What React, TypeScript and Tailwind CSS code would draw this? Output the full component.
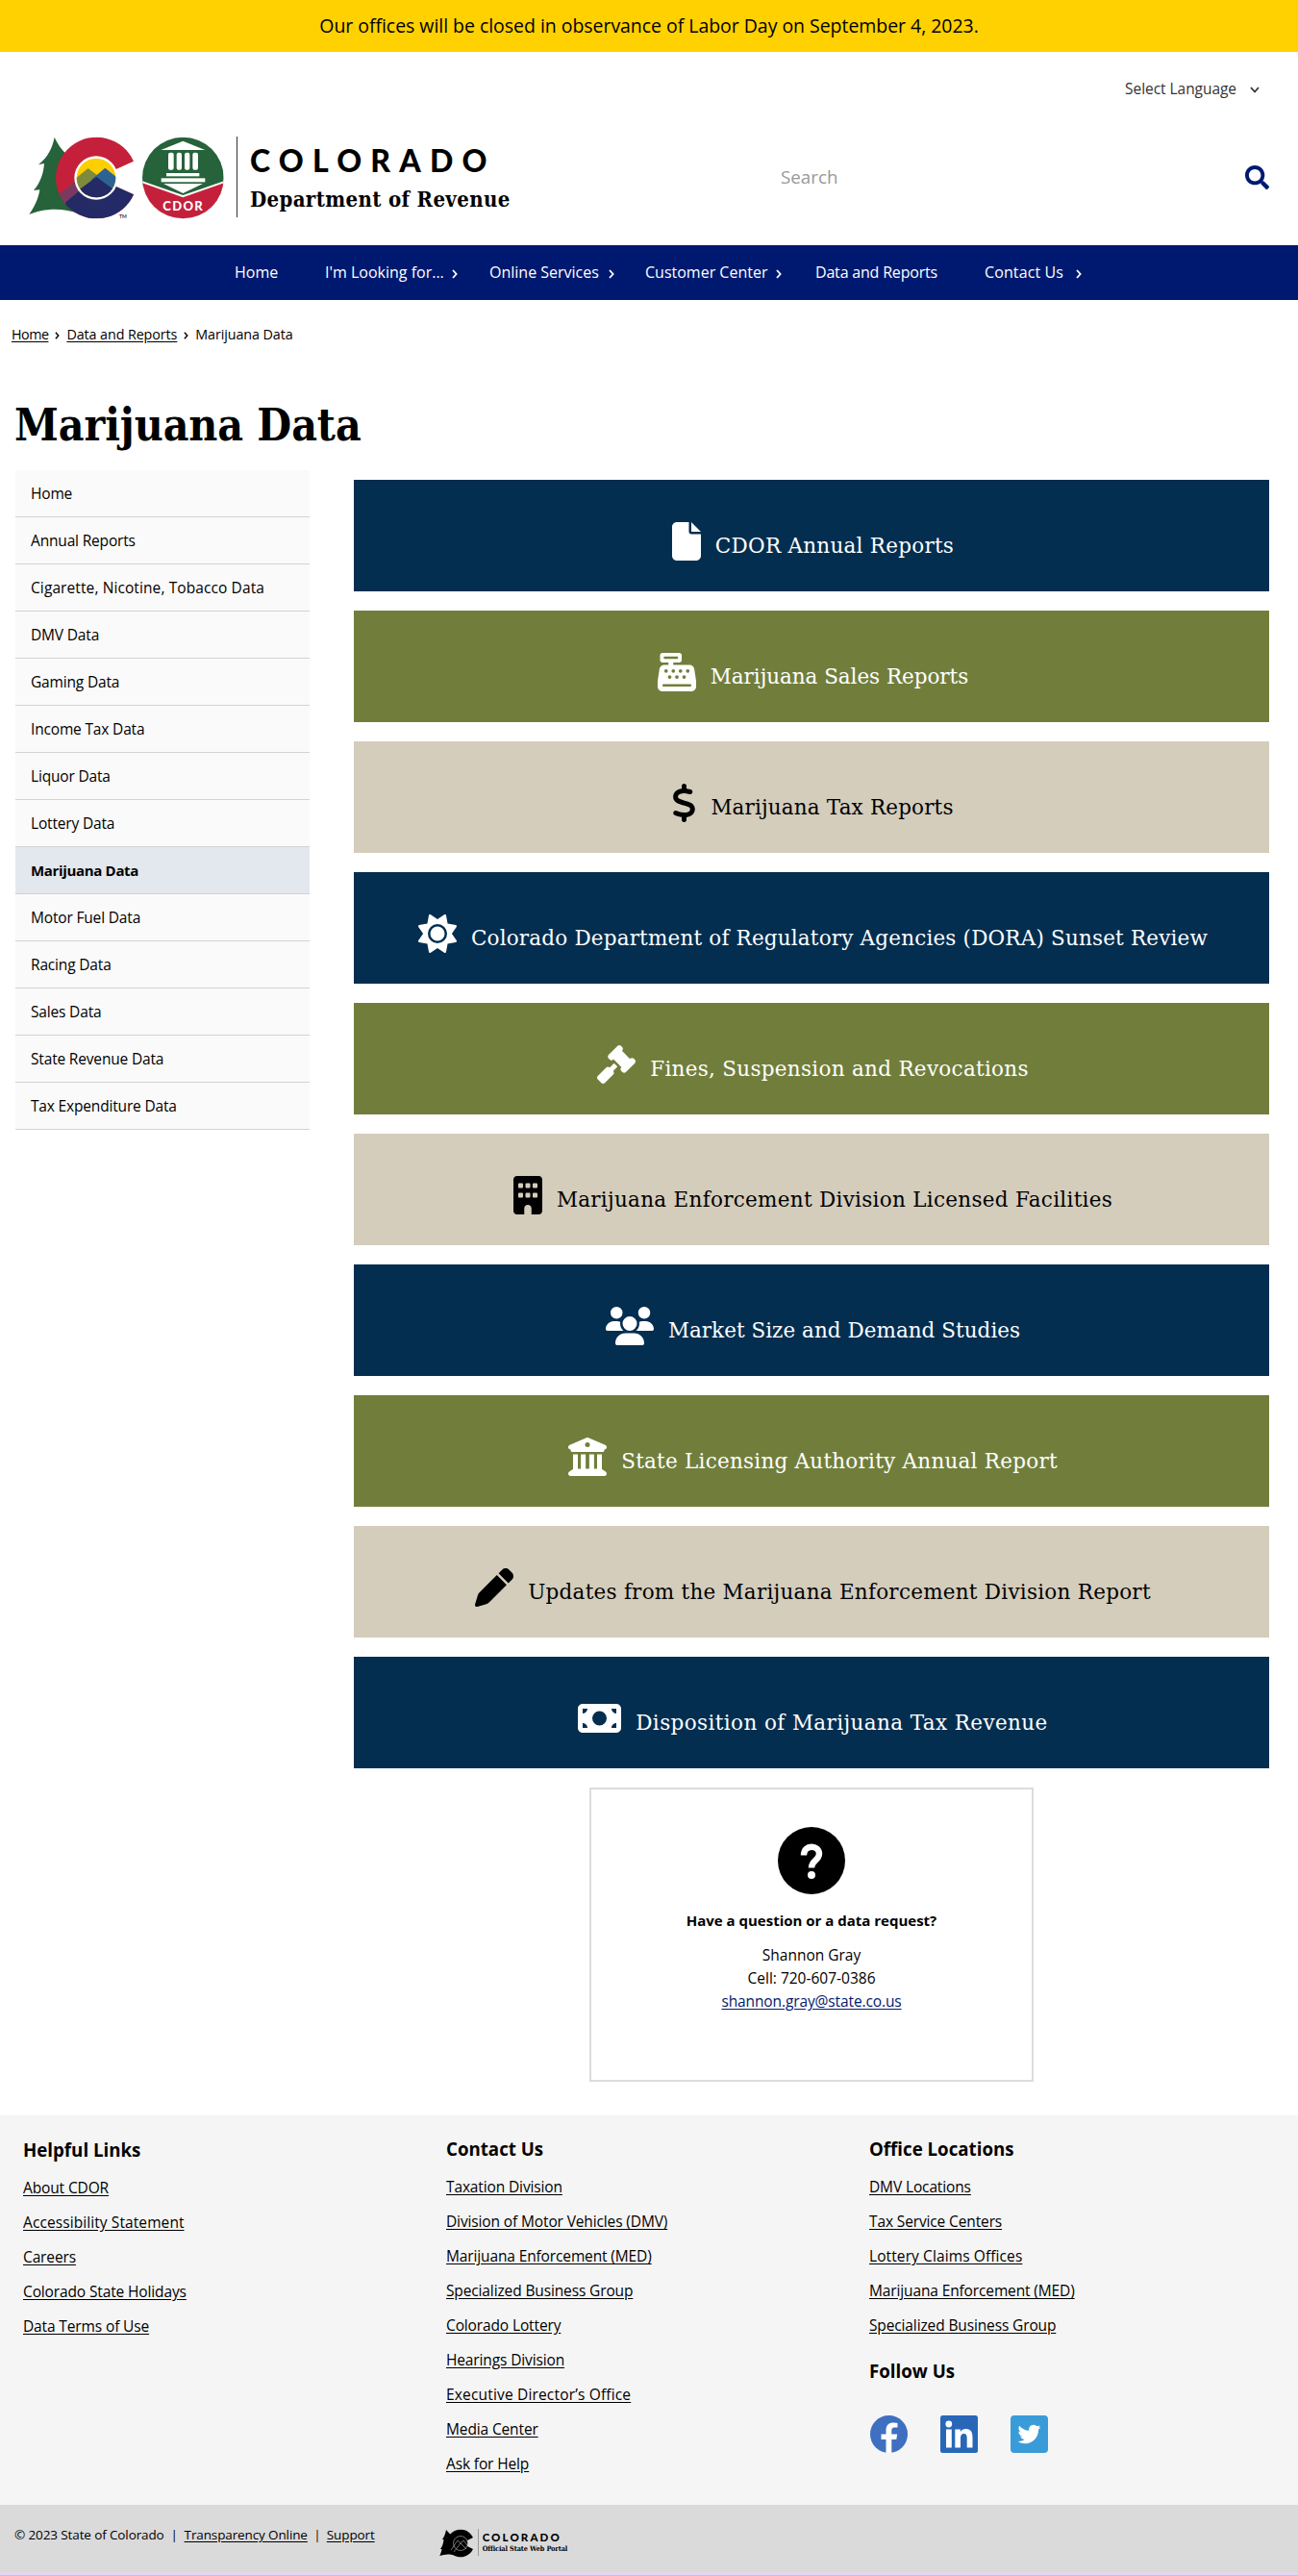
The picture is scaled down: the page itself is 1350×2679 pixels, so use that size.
import type { ReactNode } from "react";
import {
  FaBuilding,
  FaBuildingColumns,
  FaCashRegister,
  FaDollarSign,
  FaFile,
  FaGavel,
  FaMoneyBill,
  FaPen,
  FaSun,
  FaUsers,
} from "react-icons/fa6";
import { FaSearch } from "react-icons/fa";

function Chevron({ className, down = false }: { className: string; down?: boolean }) {
  return (
    <svg viewBox="0 0 6 10" className={className} fill="none" stroke="currentColor" strokeWidth="1.8">
      {down ? <path d="M-1 3l4 4.5L7 3" /> : <path d="M1 1l3.6 4L1 9" />}
    </svg>
  );
}

function ColoradoLogo() {
  return (
    <svg viewBox="30 36 612 260" className="h-[86.7px] w-[204px] shrink-0">
      <defs>
        <clipPath id="c-outer">
          <path d="M357 113A127 127 0 1 0 357 217L302 192V138Z" />
        </clipPath>
        <clipPath id="c-inner">
          <circle cx="240" cy="165" r="61" />
        </clipPath>
        <clipPath id="badge">
          <circle cx="511" cy="165" r="127" />
        </clipPath>
      </defs>
      <path
        d="M110 38C104 68 92 98 60 124L78 120C76 150 66 180 45 204L64 202C60 230 46 258 31 279C70 262 130 254 192 278L240 165L148 90C134 80 120 60 110 38Z"
        fill="#26623a"
      />
      <g clipPath="url(#c-outer)">
        <rect x="100" y="30" width="270" height="270" fill="#c5203b" />
        <path d="M110 228L185 168L210 200L150 246L130 260Z" fill="#7a3a60" />
        <path d="M145 241L190 203L250 160L380 190V300H140Z" fill="#242a66" />
      </g>
      <circle cx="240" cy="165" r="68" fill="#fff" />
      <g clipPath="url(#c-inner)">
        <rect x="170" y="95" width="140" height="140" fill="#fccf03" />
        <path d="M160 180L215 135L250 162L200 230H160Z" fill="#7f8b3c" />
        <path d="M225 170L268 134L320 176V230H240Z" fill="#2d6293" />
        <path d="M160 232L191 199L241 162L291 199L320 232L280 260H200Z" fill="#242a66" />
      </g>
      <text x="312" y="290" fontSize="15" fontWeight="700" fill="#333" fontFamily="Lato, sans-serif">
        TM
      </text>
      <g clipPath="url(#badge)">
        <rect x="384" y="38" width="254" height="254" fill="#26623a" />
        <path d="M370 170L511 219L652 170V300H370Z" fill="#fff" />
        <path d="M370 176L511 226L652 176V300H370Z" fill="#c5203b" />
      </g>
      <g fill="#fff">
        <path d="M442 78L511 50L580 78Z" />
        <rect x="465" y="86" width="17" height="54" rx="6" />
        <rect x="491" y="86" width="16" height="54" rx="6" />
        <rect x="516" y="86" width="16" height="54" rx="6" />
        <rect x="541" y="86" width="17" height="54" rx="6" />
        <rect x="459" y="150" width="103" height="10" />
        <rect x="443" y="166" width="137" height="12" />
        <path d="M450 183H573L511 213Z" />
        <text
          x="512"
          y="267"
          fontSize="39"
          fontWeight="900"
          textAnchor="middle"
          letterSpacing="4"
          fontFamily="Lato, sans-serif"
        >
          CDOR
        </text>
      </g>
    </svg>
  );
}

function PortalMark() {
  return (
    <svg viewBox="0 0 36 30" className="h-[30px] w-[36px]">
      <path d="M7 1C6 6 4.500 9 3 11H4.500C4 16 2.500 19 1 21H2.500C2 24 1 27 0 28C6 26 12 26 17 28L20 15Z" />
      <path d="M35 9A14.300 14.300 0 1 0 35 21L29 18V12Z" />
      <circle cx="22" cy="15" r="7.500" fill="#000" stroke="#bbb" strokeWidth="0.600" />
      <path d="M12 22L19 12L22 15L25 12L29 17M15 24L22 15L28 21" fill="none" stroke="#bbb" strokeWidth="0.600" />
    </svg>
  );
}

const nav = [
  { label: "Home", box: "w-[94px]", gap: "" },
  { label: "I'm Looking for...", box: "w-[171px]", gap: "ml-[8px]" },
  { label: "Online Services", box: "w-[162px]", gap: "ml-[10px]" },
  { label: "Customer Center", box: "w-[177px]", gap: "ml-[9px]" },
  { label: "Data and Reports", box: "w-[176px] tracking-[-0.19px]", gap: "" },
  { label: "Contact Us", box: "tracking-[0.11px]", gap: "ml-[13px]" },
];

const sideLinks = [
  "Home",
  "Annual Reports",
  "Cigarette, Nicotine, Tobacco Data",
  "DMV Data",
  "Gaming Data",
  "Income Tax Data",
  "Liquor Data",
  "Lottery Data",
  "Marijuana Data",
  "Motor Fuel Data",
  "Racing Data",
  "Sales Data",
  "State Revenue Data",
  "Tax Expenditure Data",
];

const navy = "bg-[#032e50] text-white";
const olive = "bg-[#717e3b] text-white";
const sand = "bg-[#d4cdbc] text-black";

const reports: { label: string; tone: string; track: string; icon: ReactNode }[] = [
  { label: "CDOR Annual Reports", tone: navy, track: "tracking-[0.25px]", icon: <FaFile className="h-10 w-[30px]" /> },
  { label: "Marijuana Sales Reports", tone: olive, track: "tracking-[-0.05px]", icon: <FaCashRegister className="size-10" /> },
  { label: "Marijuana Tax Reports", tone: sand, track: "tracking-[0.16px]", icon: <FaDollarSign className="h-10 w-[25px]" /> },
  {
    label: "Colorado Department of Regulatory Agencies (DORA) Sunset Review",
    tone: navy,
    track: "tracking-[0.18px]",
    icon: <FaSun className="size-10" />,
  },
  { label: "Fines, Suspension and Revocations", tone: olive, track: "tracking-[0.29px]", icon: <FaGavel className="size-10" /> },
  {
    label: "Marijuana Enforcement Division Licensed Facilities",
    tone: sand,
    track: "tracking-[0.29px]",
    icon: <FaBuilding className="h-10 w-[30px]" />,
  },
  { label: "Market Size and Demand Studies", tone: navy, track: "tracking-[0.03px]", icon: <FaUsers className="h-10 w-[50px]" /> },
  {
    label: "State Licensing Authority Annual Report",
    tone: olive,
    track: "tracking-[0.24px]",
    icon: <FaBuildingColumns className="size-10" />,
  },
  {
    label: "Updates from the Marijuana Enforcement Division Report",
    tone: sand,
    track: "tracking-[0.25px]",
    icon: <FaPen className="size-10" />,
  },
  {
    label: "Disposition of Marijuana Tax Revenue",
    tone: navy,
    track: "tracking-[0.4px]",
    icon: <FaMoneyBill className="h-10 w-[45px]" />,
  },
];

const helpful = ["About CDOR", "Accessibility Statement", "Careers", "Colorado State Holidays", "Data Terms of Use"];
const contact = [
  "Taxation Division",
  "Division of Motor Vehicles (DMV)",
  "Marijuana Enforcement (MED)",
  "Specialized Business Group",
  "Colorado Lottery",
  "Hearings Division",
  "Executive Director’s Office",
  "Media Center",
  "Ask for Help",
];
const offices = [
  "DMV Locations",
  "Tax Service Centers",
  "Lottery Claims Offices",
  "Marijuana Enforcement (MED)",
  "Specialized Business Group",
];

const linkTracking: Record<string, string> = {
  "Accessibility Statement": "tracking-[0.09px]",
  "Executive Director’s Office": "tracking-[0.17px]",
  "Lottery Claims Offices": "tracking-[0.1px]",
};

function FooterHeading({ children }: { children: ReactNode }) {
  return <h2 className="text-[18.700px] leading-7 font-bold">{children}</h2>;
}

function FooterLinks({ items }: { items: string[] }) {
  return (
    <ul className="mt-[7px] text-[15.5px] tracking-[-0.13px]">
      {items.map((item) => (
        <li key={item} className="h-9 leading-9">
          <a className={"underline underline-offset-2 " + (linkTracking[item] ?? "")}>{item}</a>
        </li>
      ))}
    </ul>
  );
}

export default function App() {
  return (
    <div className="flex h-[2679px] w-[1350px] flex-col overflow-hidden bg-white font-['Open_Sans',sans-serif] text-[15.5px] whitespace-nowrap text-black">
      <div className="flex h-[54px] items-center justify-center bg-[#ffd100] text-[19.5px] tracking-[-0.04px]">
        Our offices will be closed in observance of Labor Day on September 4, 2023.
      </div>

      <header className="flex h-[201px] justify-between pr-[30px] pl-[30px]">
        <div className="flex items-start pt-[88px]">
          <ColoradoLogo />
          <div className="ml-[12px] flex h-[84px] flex-col border-l border-[#333] pt-px pl-[13px]">
            <span className="mt-[6px] font-['Lato',sans-serif] text-[32px] leading-9 font-black tracking-[9.2px]">
              COLORADO
            </span>
            <span className="mt-[6px] font-['DejaVu_Serif_Condensed','DejaVu_Serif',serif] text-[22px] leading-8 font-bold tracking-[0.36px] [font-stretch:condensed]">
              Department of Revenue
            </span>
          </div>
        </div>
        <div className="flex w-[509px] flex-col">
          <button className="mt-[27px] mr-[10px] flex items-center self-end text-[#333]">
            <span className="tracking-[-0.05px]">Select Language</span>
            <Chevron down className="ml-[14px] h-[10px] w-[10px]" />
          </button>
          <div className="mt-[66px] flex items-center justify-between">
            <span className="pl-px text-[18.8px] leading-7 text-[#999]">Search</span>
            <FaSearch className="size-[25px] text-[#001970]" />
          </div>
        </div>
      </header>

      <nav className="flex h-[57px] items-center bg-[#001970] pb-px pl-[244px] text-[16px] text-white">
        {nav.map((item) => (
          <a key={item.label} className={"flex items-center " + item.box}>
            {item.label}
            {item.gap && <Chevron className={"mt-1 h-[10px] w-[6px] " + item.gap} />}
          </a>
        ))}
      </nav>

      <div className="mt-[24px] flex h-6 items-center pl-[12px] text-[14.3px] tracking-[-0.08px]">
        <a className="tracking-[-0.5px] underline underline-offset-2">Home</a>
        <Chevron className="mx-[7px] mt-[2px] h-[8px] w-[5px]" />
        <a className="underline underline-offset-2">Data and Reports</a>
        <Chevron className="mx-[7px] mt-[2px] h-[8px] w-[5px]" />
        <span>Marijuana Data</span>
      </div>

      <h1 className="mt-[48px] pl-[15px] font-['DejaVu_Serif_Condensed','DejaVu_Serif',serif] text-[46px] leading-[68px] font-bold tracking-[-0.1px] [font-stretch:condensed]">
        Marijuana Data
      </h1>

      <main className="mt-[13px] flex pl-[16px]">
        <aside className="w-[306px]">
          <ul>
            {sideLinks.map((item) => (
              <li
                key={item}
                className={
                  item === "Marijuana Data"
                    ? "flex h-[49px] items-center border-b border-[#d3d3d3] bg-[#e3e7ee] pt-px pl-4 text-[15px] font-bold tracking-[-0.33px]"
                    : item.startsWith("Cigarette")
                      ? "flex h-[49px] items-center border-b border-[#d3d3d3] bg-[#fafafa] pt-[2px] pl-4 tracking-[0.1px]"
                      : "flex h-[49px] items-center border-b border-[#d3d3d3] bg-[#fafafa] pt-[2px] pl-4 tracking-[-0.17px]"
                }
              >
                {item}
              </li>
            ))}
          </ul>
        </aside>
        <section className="mt-[10px] ml-[46px] flex w-[952px] flex-col items-center gap-5">
          {reports.map((r) => (
            <a key={r.label} className={"flex h-[116px] w-full items-start justify-center gap-[15px] pt-[44px] pl-[3px] " + r.tone}>
              {r.icon}
              <span className={"mt-[9px] font-['DejaVu_Serif',serif] text-[21.5px] leading-8 " + r.track}>{r.label}</span>
            </a>
          ))}
          <div className="flex h-[306px] w-[462px] flex-col items-center border-2 border-[#dcdcdc] pt-[39px]">
            <svg viewBox="0 0 70 70" className="size-[70px]">
              <circle cx="35" cy="35" r="35" />
              <path
                d="M27 29.500C27 17.500 43 18.500 43 28C43 34.500 35 35 35 42.500"
                fill="none"
                stroke="#fff"
                strokeWidth="6.400"
              />
              <circle cx="35" cy="50" r="4" fill="#fff" />
            </svg>
            <p className="mt-[15px] text-[15px] leading-6 font-bold">Have a question or a data request?</p>
            <p className="mt-3 leading-6">Shannon Gray</p>
            <p className="leading-6">Cell: 720-607-0386</p>
            <a className="leading-6 tracking-[-0.12px] text-[#001970] underline underline-offset-2">shannon.gray@state.co.us</a>
          </div>
        </section>
      </main>

      <footer className="mt-[35px] flex h-[405px] bg-[#f5f5f5] pl-[24px]">
        <div className="w-[440px] pt-[22px]">
          <FooterHeading>Helpful Links</FooterHeading>
          <FooterLinks items={helpful} />
        </div>
        <div className="w-[440px] pt-[21px]">
          <FooterHeading>Contact Us</FooterHeading>
          <FooterLinks items={contact} />
        </div>
        <div className="pt-[21px]">
          <FooterHeading>Office Locations</FooterHeading>
          <FooterLinks items={offices} />
          <div className="mt-[16px]">
            <FooterHeading>Follow Us</FooterHeading>
          </div>
          <div className="mt-[32px] flex gap-[34px] pl-px">
            <svg viewBox="0 0 39 39" className="size-[39px]">
              <circle cx="19.5" cy="19.5" r="19.5" fill="#3f6fc0" />
              <path
                d="M16.500 39V25H11.500V19.500H16.500V15.500C16.500 10 19.500 7.500 24.500 7.500C26 7.500 27.500 7.700 28.500 8V12.500H25.500C23 12.500 22.300 13.800 22.300 16V19.500H28.200L27.300 25H22.300V39Z"
                fill="#fff"
              />
            </svg>
            <svg viewBox="0 0 39 39" className="size-[39px]">
              <rect width="39" height="39" rx="2.500" fill="#2867b8" />
              <g fill="#fff">
                <circle cx="8.800" cy="9" r="3.400" />
                <path d="M6 14.500H11.800V33.500H6ZM15.300 14.500H20.800V17.200C22 15 24.200 14 26.600 14C32 14 33.500 17.700 33.500 23V33.500H27.700V24.200C27.700 21.500 27.300 19 24.600 19C21.800 19 21 21.200 21 24V33.500H15.300Z" />
              </g>
            </svg>
            <svg viewBox="0 0 39 39" className="size-[39px]">
              <rect width="39" height="39" rx="4" fill="#3a9bd9" />
              <svg x="7.500" y="7.500" width="24" height="24" viewBox="0 0 24 24">
                <path
                  d="M23.950 4.570a10 10 0 0 1-2.830.780 4.960 4.960 0 0 0 2.160-2.720c-.950.550-2 .950-3.130 1.180a4.920 4.920 0 0 0-8.380 4.480C7.690 8.090 4.070 6.130 1.640 3.160a4.820 4.820 0 0 0-.670 2.480c0 1.710.870 3.210 2.190 4.100a4.900 4.900 0 0 1-2.230-.620v.060a4.920 4.920 0 0 0 3.950 4.830 5 5 0 0 1-2.210.080 4.940 4.940 0 0 0 4.600 3.420A9.870 9.870 0 0 1 0 19.540a13.990 13.990 0 0 0 7.550 2.210c9.050 0 14-7.500 14-13.980 0-.210 0-.420-.020-.630a9.940 9.940 0 0 0 2.460-2.550z"
                  fill="#fff"
                />
              </svg>
            </svg>
          </div>
        </div>
      </footer>

      <div className="flex h-[70px] items-start bg-[#dadada] pl-[15px] text-[13.5px]">
        <div className="mt-[19px] flex leading-6 tracking-[-0.12px]">
          <span>© 2023 State of Colorado</span>
          <span className="w-[21px] text-center">|</span>
          <a className="underline underline-offset-2">Transparency Online</a>
          <span className="w-[20px] text-center">|</span>
          <a className="underline underline-offset-2">Support</a>
        </div>
        <div className="mt-[25px] ml-[67px] flex">
          <PortalMark />
          <div className="ml-[4px] flex h-[28px] flex-col border-l border-[#999] pl-[4px]">
            <span className="mt-[2px] font-['Lato',sans-serif] text-[11.5px] leading-[13px] font-black tracking-[2.100px]">COLORADO</span>
            <span className="mt-[1px] font-['DejaVu_Serif_Condensed','DejaVu_Serif',serif] text-[7.300px] leading-[9px] font-bold tracking-[-0.1px] [font-stretch:condensed]">
              Official State Web Portal
            </span>
          </div>
        </div>
      </div>
      <div className="h-[3px] bg-[#e4d6ee]" />
      <div className="h-px bg-[#ffd100]" />
    </div>
  );
}
